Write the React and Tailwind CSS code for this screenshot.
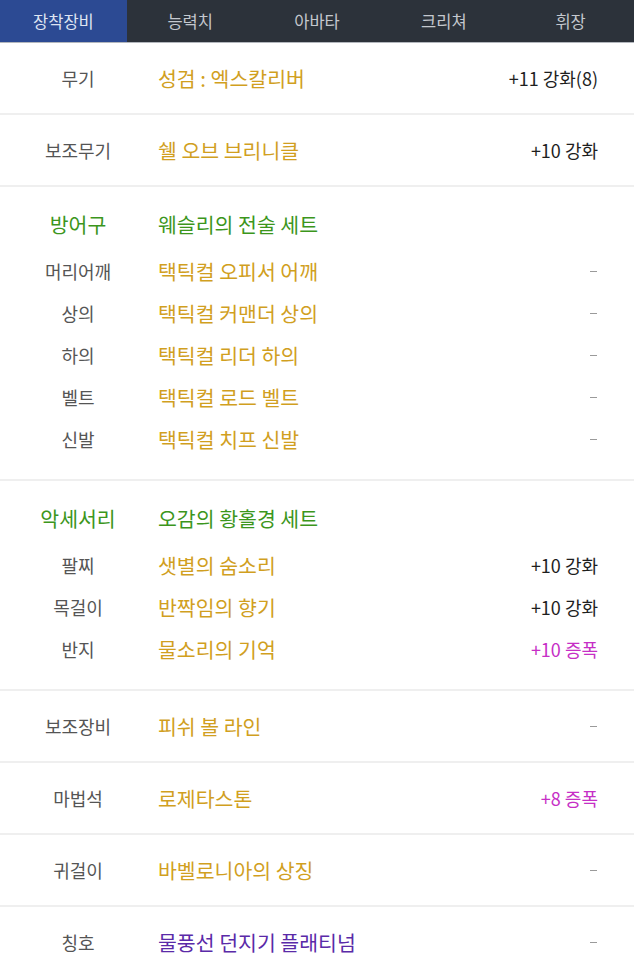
import React from 'react';

const tabs = ['장착장비', '능력치', '아바타', '크리쳐', '휘장'];

const GOLD = 'text-[#d19f1f]';

const sections = [
  { rows: [{ label: '무기', name: '성검 : 엑스칼리버', extra: '+11 강화(8)' }] },
  { rows: [{ label: '보조무기', name: '쉘 오브 브리니클', extra: '+10 강화' }] },
  {
    set: { label: '방어구', name: '웨슬리의 전술 세트' },
    rows: [
      { label: '머리어깨', name: '택틱컬 오피서 어깨' },
      { label: '상의', name: '택틱컬 커맨더 상의' },
      { label: '하의', name: '택틱컬 리더 하의' },
      { label: '벨트', name: '택틱컬 로드 벨트' },
      { label: '신발', name: '택틱컬 치프 신발' },
    ],
  },
  {
    set: { label: '악세서리', name: '오감의 황홀경 세트' },
    rows: [
      { label: '팔찌', name: '샛별의 숨소리', extra: '+10 강화' },
      { label: '목걸이', name: '반짝임의 향기', extra: '+10 강화' },
      { label: '반지', name: '물소리의 기억', extra: '+10 증폭', amp: true },
    ],
  },
  { rows: [{ label: '보조장비', name: '피쉬 볼 라인' }] },
  { rows: [{ label: '마법석', name: '로제타스톤', extra: '+8 증폭', amp: true }] },
  { rows: [{ label: '귀걸이', name: '바벨로니아의 상징' }] },
  { rows: [{ label: '칭호', name: '물풍선 던지기 플래티넘', purple: true }] },
];

const Extra = ({ row }) => {
  if (!row.extra) {
    return <span className="w-[7px] h-px bg-[#9a9a9a] mr-[1px]"></span>;
  }
  return (
    <span className={`text-[18px] ${row.amp ? 'text-[#c62fc6]' : 'text-[#1e1e1e]'}`}>
      {row.extra}
    </span>
  );
};

const Row = ({ row, tall }) => (
  <div className={`flex items-center ${tall ? 'h-[70px]' : 'h-[42px]'}`}>
    <div className="w-[158px] text-center text-[18px] text-[#555] pr-[2px]">{row.label}</div>
    <div className={`flex-1 text-[20.5px] ${row.purple ? 'text-[#5a2aa8]' : GOLD}`}>{row.name}</div>
    <div className="pr-[36px] flex items-center">
      <Extra row={row} />
    </div>
  </div>
);

export default function App() {
  return (
    <div className="w-[634px] min-h-[960px] bg-white font-['Noto_Sans_CJK_KR',sans-serif] overflow-hidden">
      <div className="flex h-[43px] bg-[#2c323a] border-b border-[#b3b7bd]">
        {tabs.map((t, i) => (
          <div
            key={t}
            className={`flex-1 flex items-center justify-center text-[16.5px] ${
              i === 0 ? 'bg-[#2c4a93] text-[#dfe5f2]' : 'text-[#c4c8ce]'
            }`}
          >
            {t}
          </div>
        ))}
      </div>

      {sections.map((s, i) => (
        <div key={i} className="border-b-2 border-[#efefef]">
          {s.set ? (
            <div className="pt-[16px] pb-[19px]">
              <div className="flex items-center h-[42px] mb-[5px] text-[#3c961c]">
                <div className="w-[158px] text-center text-[20.5px] pr-[2px]">{s.set.label}</div>
                <div className="flex-1 text-[20.5px]">{s.set.name}</div>
              </div>
              {s.rows.map((r) => (
                <Row key={r.label} row={r} />
              ))}
            </div>
          ) : (
            <Row row={s.rows[0]} tall />
          )}
        </div>
      ))}
    </div>
  );
}
